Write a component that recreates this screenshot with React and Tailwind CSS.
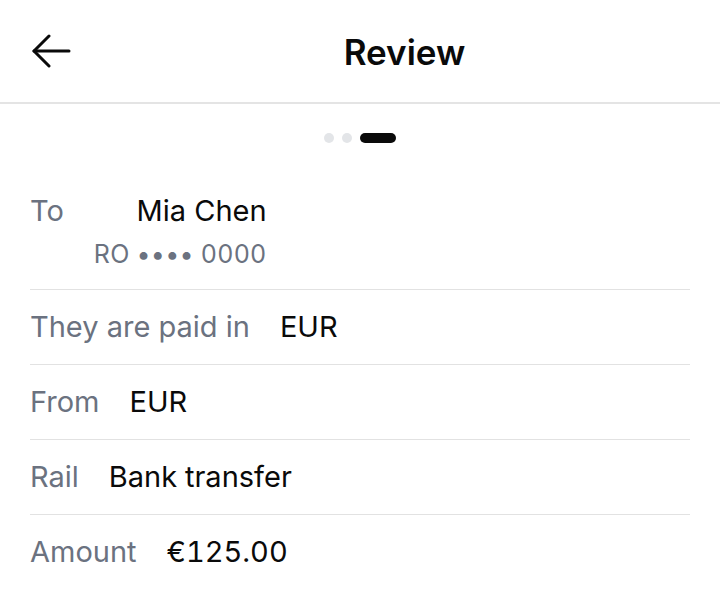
const FONT = { fontFamily: "Inter, 'Noto Sans', sans-serif" };

const rows = [
  { label: "They are paid in", value: "EUR" },
  { label: "From", value: "EUR" },
  { label: "Rail", value: "Bank transfer" },
  { label: "Amount", value: "€125.00" },
];

function BackArrow() {
  return (
    <svg width="40" height="34" viewBox="0 0 40 34" fill="none">
      <path d="M3 17H38" stroke="#0a0a0a" strokeWidth="3" strokeLinecap="round" />
      <path d="M18 2L3 17L18 32" stroke="#0a0a0a" strokeWidth="3" strokeLinecap="round" strokeLinejoin="round" />
    </svg>
  );
}

function Row({ label, children, last }) {
  return (
    <div className={`flex items-start gap-[30px] py-5 ${last ? "" : "border-b-[1.5px] border-[#e2e2e2]"}`}>
      <span className="text-[29px] leading-[34px] text-[#6b7280]">{label}</span>
      {children}
    </div>
  );
}

export default function App() {
  return (
    <div className="w-[720px] h-[603px] bg-white overflow-hidden" style={FONT}>
      <header className="h-[104px] flex items-center border-b-2 border-[#e4e4e4]">
        <button className="w-[89px] pl-[31px] flex items-center">
          <BackArrow />
        </button>
        <h1 className="flex-1 text-center text-[35px] font-semibold text-[#0a0a0a] leading-none pt-[2px]">Review</h1>
      </header>

      <div className="flex justify-center items-center gap-2 pt-[29px] pb-[31px]">
        <span className="w-[10px] h-[10px] rounded-full bg-[#e3e5e8]" />
        <span className="w-[10px] h-[10px] rounded-full bg-[#e3e5e8]" />
        <span className="w-[36px] h-[10px] rounded-full bg-[#0a0a0a]" />
      </div>

      <div className="px-[30px]">
        <Row label="To">
          <div className="flex flex-col items-end">
            <span className="text-[29px] leading-[34px] text-[#0a0a0a]">Mia Chen</span>
            <span className="text-[25px] leading-[30px] text-[#6b7280] mt-[11px] tabular-nums tracking-[0.01em]">RO •••• 0000</span>
          </div>
        </Row>
        {rows.map((r, i) => (
          <Row key={r.label} label={r.label} last={i === rows.length - 1}>
            <span className="text-[29px] leading-[34px] text-[#0a0a0a] tabular-nums">{r.value}</span>
          </Row>
        ))}
      </div>
    </div>
  );
}
